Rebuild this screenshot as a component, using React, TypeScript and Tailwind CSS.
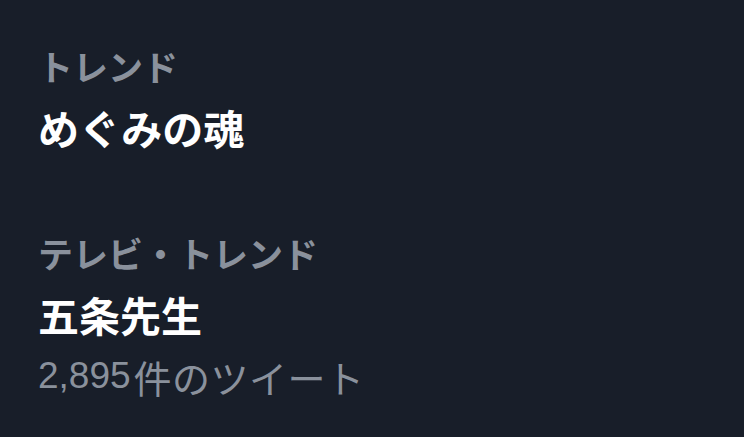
export default function App() {
  const font = { fontFamily: '"Noto Sans CJK JP", "Noto Sans", sans-serif' };
  return (
    <div className="w-[744px] h-[437px] bg-[#181e29] overflow-hidden pl-[38px] pt-[36px]" style={font}>
      <div className="flex flex-col">
        <div className="h-[61px] flex items-center text-[35px] font-bold text-[#8a919c]">トレンド</div>
        <div className="h-[62px] flex items-center text-[41px] font-bold text-white">めぐみの魂</div>
      </div>
      <div className="flex flex-col mt-[64px]">
        <div className="h-[61px] flex items-center text-[35px] font-bold text-[#8a919c]">テレビ・トレンド</div>
        <div className="h-[61px] flex items-center text-[41px] font-bold text-white">五条先生</div>
        <div className="h-[62px] flex items-center text-[#8a919c]">
          <span className="text-[37px]" style={{ fontFamily: '"Liberation Sans", sans-serif' }}>
            2,895
          </span>
          <span className="text-[38px] ml-[3px] tracking-[0.5px]">件のツイート</span>
        </div>
      </div>
    </div>
  );
}
